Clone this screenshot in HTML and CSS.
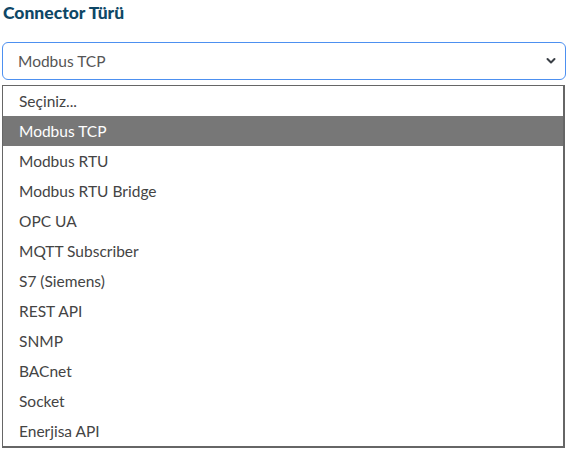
FILE: index.html
```html
<html>
<head>
<title>Connector Türü</title>
<link rel="stylesheet" href="styles.css">
</head>
<body>
<div class="field">
    <label class="label">Connector Türü</label>
    <div class="select">
        <span class="value">Modbus TCP</span>
        <svg class="chevron" width="12" height="8" viewBox="0 0 12 8"><path d="M2.5 2 L6 5.5 L9.5 2" fill="none" stroke="#3a3f45" stroke-width="2" stroke-linecap="round" stroke-linejoin="round"/></svg>
    </div>
    <ul class="options">
        <li class="option">Seçiniz...</li>
        <li class="option selected">Modbus TCP</li>
        <li class="option">Modbus RTU</li>
        <li class="option">Modbus RTU Bridge</li>
        <li class="option">OPC UA</li>
        <li class="option">MQTT Subscriber</li>
        <li class="option">S7 (Siemens)</li>
        <li class="option">REST API</li>
        <li class="option">SNMP</li>
        <li class="option">BACnet</li>
        <li class="option">Socket</li>
        <li class="option">Enerjisa API</li>
    </ul>
</div>
</body>
</html>
```

FILE: styles.css
```css
body {
    margin: 0;
    padding: 0 6px 0 2px;
    background: #fff;
    font-family: "Lato", "Noto Sans", sans-serif;
}
.field {
    display: flex;
    flex-direction: column;
}
.label {
    display: block;
    margin: 2px 0 0 1px;
    height: 40px;
    font-size: 17.5px;
    font-weight: 900;
    color: #0e4766;
}
.select {
    display: flex;
    align-items: center;
    justify-content: space-between;
    height: 36px;
    padding: 0 8px 0 15px;
    border: 1px solid #4d90f0;
    border-radius: 6px;
    color: #555;
    font-size: 15.5px;
}
.chevron {
    display: block;
}
.options {
    list-style: none;
    margin: 5px 1px 0 0;
    padding: 0;
    border: 2px solid #666;
    border-width: 1px 2px 2px 1px;
}
.option {
    height: 30px;
    line-height: 30px;
    padding-left: 16px;
    font-size: 15.5px;
    color: #444;
}
.selected {
    background: #777;
    color: #fff;
}
```
